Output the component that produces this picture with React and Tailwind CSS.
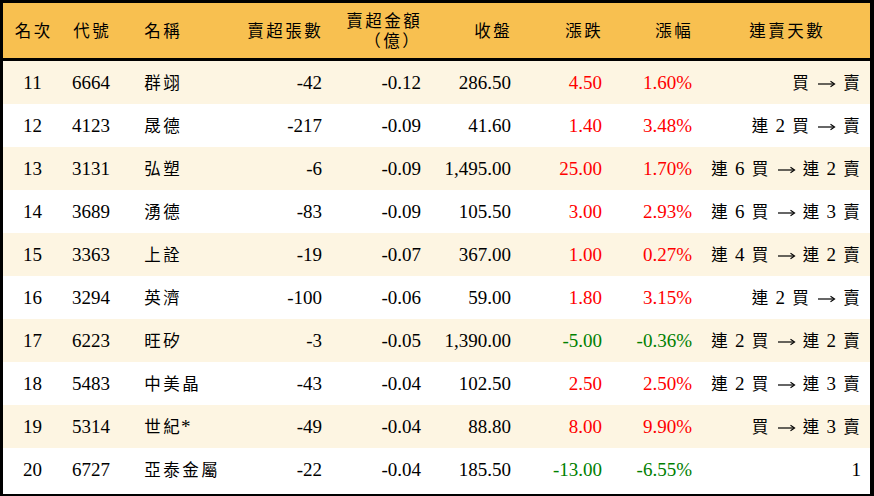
import React from 'react';

const rows = [
  ['11', '6664', '群翊', '-42', '-0.12', '286.50', '4.50', '1.60%', '買 → 賣'],
  ['12', '4123', '晟德', '-217', '-0.09', '41.60', '1.40', '3.48%', '連 2 買 → 賣'],
  ['13', '3131', '弘塑', '-6', '-0.09', '1,495.00', '25.00', '1.70%', '連 6 買 → 連 2 賣'],
  ['14', '3689', '湧德', '-83', '-0.09', '105.50', '3.00', '2.93%', '連 6 買 → 連 3 賣'],
  ['15', '3363', '上詮', '-19', '-0.07', '367.00', '1.00', '0.27%', '連 4 買 → 連 2 賣'],
  ['16', '3294', '英濟', '-100', '-0.06', '59.00', '1.80', '3.15%', '連 2 買 → 賣'],
  ['17', '6223', '旺矽', '-3', '-0.05', '1,390.00', '-5.00', '-0.36%', '連 2 買 → 連 2 賣'],
  ['18', '5483', '中美晶', '-43', '-0.04', '102.50', '2.50', '2.50%', '連 2 買 → 連 3 賣'],
  ['19', '5314', '世紀*', '-49', '-0.04', '88.80', '8.00', '9.90%', '買 → 連 3 賣'],
  ['20', '6727', '亞泰金屬', '-22', '-0.04', '185.50', '-13.00', '-6.55%', '1'],
];

const cols = 'grid grid-cols-[59px_70px_100px_100px_99px_90px_91px_90px_168px]';

const CJK = /[\u4e00-\u9fff\uff08\uff09]/;

// CJK chars get a fixed 19px box so the sans glyphs don't look too heavy
function Txt({ children }) {
  const parts = String(children).split(/([\u4e00-\u9fff\uff08\uff09→ ])/);
  return (
    <>
      {parts.map((p, i) => {
        if (p === ' ') return <span key={i} className="inline-block w-[6px]" />;
        if (p === '→') {
          return (
            <span key={i} className="inline-block w-[20px] align-middle">
              <svg width="20" height="8" viewBox="0 0 20 8" className="block">
                <path d="M2 4H18" stroke="black" strokeWidth="1.2" />
                <path d="M14.5 1.2L18.6 4L14.5 6.8" stroke="black" strokeWidth="1.1" fill="none" />
              </svg>
            </span>
          );
        }
        if (CJK.test(p)) {
          return (
            <span key={i} className="inline-block w-[19px] text-center text-[16.5px]">
              {p}
            </span>
          );
        }
        return p && <span key={i}>{p}</span>;
      })}
    </>
  );
}

function App() {
  return (
    <div className="w-[874px] h-[496px] bg-white border-t-[3px] border-l-[3px] border-r-4 border-b-2 border-black font-['Liberation_Serif','Noto_Sans_CJK_TC',serif] text-[19px] text-black leading-none">
      <div className={`${cols} h-[58px] bg-[#f8c050] border-b-[3px] border-black items-center`}>
        <div className="text-center"><Txt>名次</Txt></div>
        <div className="pl-[10px]"><Txt>代號</Txt></div>
        <div className="pl-[11px]"><Txt>名稱</Txt></div>
        <div className="text-right pr-[10px]"><Txt>賣超張數</Txt></div>
        <div className="text-right pr-[10px] leading-[19px]">
          <div><Txt>賣超金額</Txt></div>
          <div className="pr-[1px]"><Txt>（億）</Txt></div>
        </div>
        <div className="text-right pr-[10px]"><Txt>收盤</Txt></div>
        <div className="text-right pr-[10px]"><Txt>漲跌</Txt></div>
        <div className="text-right pr-[10px]"><Txt>漲幅</Txt></div>
        <div className="text-center"><Txt>連賣天數</Txt></div>
      </div>
      {rows.map((r, i) => {
        const down = r[6].startsWith('-');
        const color = down ? 'text-[#008000]' : 'text-[#ff0000]';
        return (
          <div key={r[0]} className={`${cols} h-[43px] items-center ${i % 2 === 0 ? 'bg-[#fdf5e2]' : 'bg-white'}`}>
            <div className="text-center">{r[0]}</div>
            <div className="pl-[10px]">{r[1]}</div>
            <div className="pl-[11px]"><Txt>{r[2]}</Txt></div>
            <div className="text-right pr-[10px]">{r[3]}</div>
            <div className="text-right pr-[10px]">{r[4]}</div>
            <div className="text-right pr-[10px]">{r[5]}</div>
            <div className={`text-right pr-[10px] ${color}`}>{r[6]}</div>
            <div className={`text-right pr-[10px] ${color}`}>{r[7]}</div>
            <div className="text-right pr-[9px] whitespace-pre"><Txt>{r[8]}</Txt></div>
          </div>
        );
      })}
    </div>
  );
}

export default App;
